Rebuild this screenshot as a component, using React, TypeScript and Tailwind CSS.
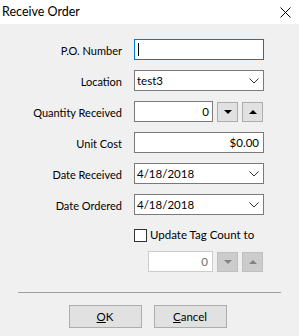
import React from "react";

const font = { fontFamily: '"Segoe UI", Lato, "Liberation Sans", sans-serif' };

const Chevron = () => (
  <svg width="10" height="6" viewBox="0 0 10 6" className="mr-[4px]">
    <polyline points="0.5,0.5 5,5 9.5,0.5" fill="none" stroke="#333" strokeWidth="1" />
  </svg>
);

const Tri = ({ up, color = "#000" }: { up?: boolean; color?: string }) => (
  <svg width="8" height="4" viewBox="0 0 8 4">
    <polygon points={up ? "0,4 8,4 4,0" : "0,0 8,0 4,4"} fill={color} />
  </svg>
);

const Label = ({ children }: { children: React.ReactNode }) => (
  <div className="w-[122px] text-right text-[11px] text-black leading-[21px] pt-[2px]">{children}</div>
);

const Row = ({ label, children }: { label?: string; children: React.ReactNode }) => (
  <div className="flex flex-row items-center h-[21px] gap-[12px]">
    <Label>{label}</Label>
    {children}
  </div>
);

const SpinButton = ({ up, disabled }: { up?: boolean; disabled?: boolean }) => (
  <div
    className={
      disabled
        ? "w-[21px] h-[20px] border border-[#bfbfbf] bg-[#cccccc] flex items-center justify-center"
        : "w-[21px] h-[20px] border border-[#adadad] bg-[#e1e1e1] flex items-center justify-center"
    }
  >
    <Tri up={up} color={disabled ? "#838383" : "#000"} />
  </div>
);

export default function App() {
  return (
    <div className="w-[299px] h-[336px] bg-[#f0f0f0] flex flex-col text-[11.5px]" style={font}>
      <div className="h-[24px] bg-white flex flex-row items-center justify-between pl-[2px] pr-[8px]">
        <span className="text-[12.5px] text-black">Receive Order</span>
        <svg width="11" height="11" viewBox="0 0 11 11">
          <path d="M0.5 0.5 L10.5 10.5 M10.5 0.5 L0.5 10.5" stroke="#000" strokeWidth="1" />
        </svg>
      </div>

      <div className="flex flex-col pt-[15px] gap-[10px]">
        <Row label="P.O. Number">
          <div className="w-[130px] h-[21px] border border-[#0078d7] bg-white flex items-center pl-[3px]">
            <div className="w-[1px] h-[13px] bg-black" />
          </div>
        </Row>
        <Row label="Location">
          <div className="w-[130px] h-[21px] border border-[#7a7a7a] bg-white flex items-center justify-between pl-[2px]">
            <span>test3</span>
            <Chevron />
          </div>
        </Row>
        <Row label="Quantity Received">
          <div className="flex flex-row items-center gap-[4px]">
            <div className="w-[79px] h-[21px] border border-[#7a7a7a] bg-white flex items-center justify-end pr-[3px]">
              0
            </div>
            <SpinButton />
            <SpinButton up />
          </div>
        </Row>
        <Row label="Unit Cost">
          <div className="w-[130px] h-[21px] border border-[#7a7a7a] bg-white flex items-center justify-end pr-[4px]">
            $0.00
          </div>
        </Row>
        <Row label="Date Received">
          <div className="w-[130px] h-[21px] border border-[#7a7a7a] bg-white flex items-center justify-between pl-[2px]">
            <span>4/18/2018</span>
            <Chevron />
          </div>
        </Row>
        <Row label="Date Ordered">
          <div className="w-[130px] h-[21px] border border-[#7a7a7a] bg-white flex items-center justify-between pl-[2px]">
            <span>4/18/2018</span>
            <Chevron />
          </div>
        </Row>
      </div>

      <div className="flex flex-row items-center mt-[13px] pl-[134px] gap-[3px] h-[14px]">
        <div className="w-[13px] h-[13px] border border-[#333333] bg-white" />
        <span className="text-black">Update Tag Count to</span>
      </div>

      <div className="flex flex-row items-center mt-[9px] pl-[148px] gap-[4px]">
        <div className="w-[65px] h-[21px] border border-[#cccccc] bg-white flex items-center justify-end pr-[4px] text-[#6d6d6d]">
          0
        </div>
        <SpinButton disabled />
        <SpinButton disabled up />
      </div>

      <div className="mt-[20px] mx-[18px] h-[1px] bg-[#a0a0a0]" />

      <div className="flex flex-row justify-center gap-[12px] mt-[12px] pr-[4px]">
        <div className="w-[73px] h-[23px] border border-[#adadad] bg-[#e1e1e1] flex items-center justify-center">
          <span>
            <span className="underline">O</span>K
          </span>
        </div>
        <div className="w-[73px] h-[23px] border border-[#adadad] bg-[#e1e1e1] flex items-center justify-center">
          <span>
            <span className="underline">C</span>ancel
          </span>
        </div>
      </div>
    </div>
  );
}
